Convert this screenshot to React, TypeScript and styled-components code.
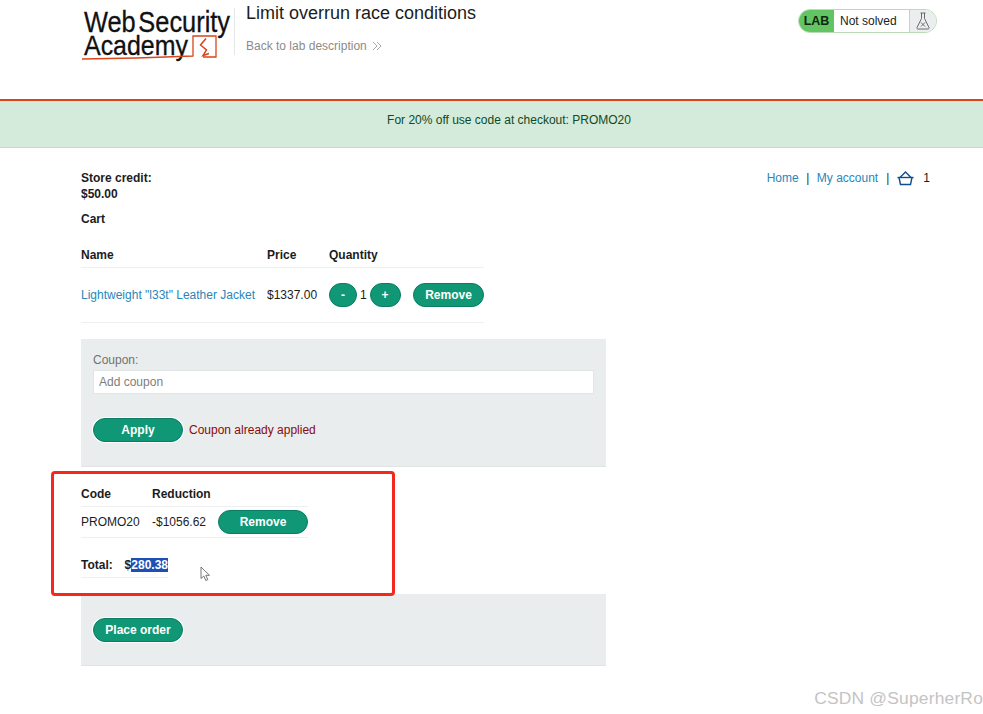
import * as React from 'react'
import styled, { createGlobalStyle } from 'styled-components'

const GlobalStyle = createGlobalStyle`
    html, body {
        margin: 0;
        padding: 0;
        background: #fff;
    }
    body {
        font-family: "Liberation Sans", Arial, sans-serif;
        font-size: 12px;
        color: #1c1c1c;
    }
`

const Page = styled.div`
    position: relative;
    width: 983px;
    height: 714px;
    overflow: hidden;
`

const Header = styled.header`
    height: 101px;
    box-sizing: border-box;
    padding: 0 46px 0 81px;
    display: flex;
    align-items: flex-start;
    border-bottom: 2px solid #d8461b;
`

const LogoWrap = styled.div`
    width: 153px;
    height: 62px;
    flex: none;
`

const TitleBlock = styled.div`
    margin: 8px 0 0 0;
    padding: 0 0 0 11px;
    height: 47px;
    border-left: 1px solid #e6e8e8;
    flex: 1;
`

const Title = styled.h1`
    margin: -5px 0 0;
    font-size: 18px;
    line-height: 21px;
    font-weight: 400;
    color: #1c1c1c;
`

const BackLink = styled.a`
    display: flex;
    align-items: center;
    gap: 5px;
    margin-top: 15px;
    font-size: 12px;
    line-height: 14px;
    color: #8b8b8b;
`

const LabBadge = styled.div`
    flex: none;
    margin-top: 9px;
    width: 139px;
    height: 24px;
    box-sizing: border-box;
    display: flex;
    border: 1px solid #b9dcb4;
    border-radius: 12px;
    overflow: hidden;
    background: #fff;
`

const LabTag = styled.span`
    width: 35px;
    background: #62c462;
    font-size: 12.5px;
    font-weight: 700;
    line-height: 22px;
    text-align: center;
    color: #10260f;
`

const LabStatus = styled.span`
    flex: 1;
    padding-left: 6px;
    font-size: 12px;
    line-height: 22px;
    color: #1c1c1c;
`

const LabIcon = styled.span`
    width: 27px;
    box-sizing: border-box;
    border-left: 1px solid #b9dcb4;
    background: #ebeeee;
    display: flex;
    align-items: center;
    justify-content: center;
`

const Banner = styled.div`
    height: 47px;
    box-sizing: border-box;
    padding-left: 35px;
    background: #d4eadb;
    border-bottom: 1px solid #c4dccb;
    text-align: center;
    font-size: 12px;
    line-height: 39px;
    color: #0f4a22;
`

const Content = styled.main`
    padding: 22px 54px 0 81px;
    position: relative;
`

const TopNav = styled.nav`
    position: absolute;
    top: 22px;
    right: 53px;
    display: flex;
    align-items: center;
    font-size: 12px;
    line-height: 16px;
`

const NavLink = styled.a`
    color: #2a86b8;
`

const NavSep = styled.span<{ $gap: number }>`
    margin: 0 ${(p) => p.$gap}px;
    color: #333;
`

const CartCount = styled.span`
    margin-left: 9px;
    color: #1c1c1c;
`

const Strong = styled.div<{ $top?: number }>`
    font-weight: 700;
    font-size: 12px;
    line-height: 16px;
    margin-top: ${(p) => p.$top ?? 0}px;
`

const Table = styled.div<{ $columns: string; $width: number; $top: number }>`
    display: grid;
    grid-template-columns: ${(p) => p.$columns};
    width: ${(p) => p.$width}px;
    margin-top: ${(p) => p.$top}px;
`

const HeadCell = styled.div`
    font-weight: 700;
    height: 20px;
    line-height: 16px;
    border-bottom: 1px solid #eef0f0;
`

const Cell = styled.div<{ $height: number }>`
    height: ${(p) => p.$height}px;
    display: flex;
    align-items: center;
    border-bottom: 1px solid #eef0f0;
`

const ProductLink = styled.a`
    color: #2a86b8;
`

const Button = styled.button<{ $width: number }>`
    width: ${(p) => p.$width}px;
    height: 24px;
    padding: 0;
    border: 1px solid #0b7d64;
    border-radius: 13px;
    background: #109775;
    color: #fff;
    font-family: inherit;
    font-size: 12px;
    font-weight: 700;
    flex: none;
`

const Qty = styled.span`
    width: 13px;
    text-align: center;
`

const RemoveGap = styled.span`
    width: 13px;
`

const Panel = styled.section<{ $height: number; $top: number }>`
    width: 525px;
    height: ${(p) => p.$height}px;
    margin-top: ${(p) => p.$top}px;
    box-sizing: border-box;
    padding: 0 12px;
    background: #e9edee;
    border-bottom: 1px solid #e0e4e5;
    overflow: hidden;
`

const CouponLabel = styled.label`
    display: block;
    margin-top: 14px;
    line-height: 14px;
    color: #727272;
`

const CouponInput = styled.input`
    display: block;
    width: 501px;
    height: 24px;
    margin-top: 3px;
    box-sizing: border-box;
    padding: 0 5px;
    border: 1px solid #e2e5e6;
    background: #fff;
    font-family: inherit;
    font-size: 12px;
    &::placeholder {
        color: #7d7d7d;
    }
`

const ApplyRow = styled.div`
    display: flex;
    align-items: center;
    gap: 6px;
    margin-top: 24px;
`

const ErrorText = styled.span`
    color: #8b0a0a;
`

const TotalRow = styled.div`
    display: flex;
    align-items: flex-start;
    width: 87px;
    height: 20px;
    margin-top: 19px;
    border-bottom: 1px solid #eef0f0;
    font-weight: 700;
    line-height: 16px;
`

const TotalLabel = styled.span`
    width: 44px;
`

const Selected = styled.span`
    background: #1d4fb4;
    color: #fff;
`

const PlaceButton = styled(Button)`
    margin-top: 24px;
    display: block;
    box-shadow: 0 0 0 1px #fff;
`

const ApplyButton = styled(Button)`
    box-shadow: 0 0 0 1px #fff;
`

const Callout = styled.div`
    position: absolute;
    left: 51px;
    top: 471px;
    width: 344px;
    height: 125px;
    box-sizing: border-box;
    border: 3px solid #f5281e;
    border-radius: 4px;
    pointer-events: none;
`

const Cursor = styled.svg`
    position: absolute;
    left: 200px;
    top: 566px;
`

const Watermark = styled.div`
    position: absolute;
    right: 0;
    top: 688px;
    font-size: 17.4px;
    line-height: 20px;
    letter-spacing: 0.2px;
    color: #c4c4c4;
    white-space: nowrap;
`

const Logo = () => (
    <svg width="153" height="62" viewBox="0 0 153 62">
        <text x="3" y="32" fontFamily="'Liberation Sans', Arial, sans-serif" fontSize="29" wordSpacing="-5" textLength="146" lengthAdjust="spacingAndGlyphs" fill="#111" stroke="#111" strokeWidth="0.300">Web Security</text>
        <text x="3" y="55" fontFamily="'Liberation Sans', Arial, sans-serif" fontSize="28" textLength="104" lengthAdjust="spacingAndGlyphs" fill="#111" stroke="#111" strokeWidth="0.300">Academy</text>
        <path d="M1 59C40 58.500 75 57.500 112 56V36H135V57H122" fill="none" stroke="#d8461b" strokeWidth="1.300" />
        <path d="M125 38.500L119.500 45L125.500 50L122 55.500L128 53.500" fill="none" stroke="#d8461b" strokeWidth="1.500" />
    </svg>
)

const Chevrons = () => (
    <svg width="10" height="10" viewBox="0 0 10 10" fill="none" stroke="#a8a8a8" strokeWidth="1">
        <path d="M1 1L5 5L1 9" />
        <path d="M5 1L9 5L5 9" />
    </svg>
)

const Flask = () => (
    <svg width="14" height="18" viewBox="0 0 14 18" fill="none" stroke="#5c5c5c" strokeWidth="0.900">
        <path d="M4.500 1H9.500M5.500 1V6.500L1 15.500C0.700 16.300 1.200 17 2 17H12C12.800 17 13.300 16.300 13 15.500L8.500 6.500V1" />
        <path d="M5 10.500L9 14.500M9 10.500L5 14.500" />
    </svg>
)

const Basket = () => (
    <svg width="17" height="15" viewBox="0 0 17 15" fill="none" stroke="#0f4d8f" strokeWidth="1.400">
        <path d="M0.500 6.500H16.500" />
        <path d="M3 6.500L8.500 1L14 6.500" />
        <path d="M2 6.500L3.500 13.500H13.500L15 6.500" />
    </svg>
)

const MouseCursor = () => (
    <Cursor width="12" height="16" viewBox="0 0 12 16">
        <path d="M1 1V12.500L3.800 10L5.800 14.500L7.800 13.600L5.800 9.300H9.500Z" fill="#fff" stroke="#555" strokeWidth="0.800" />
    </Cursor>
)

const App = () => (
    <Page>
        <GlobalStyle />
        <Header>
            <LogoWrap><Logo /></LogoWrap>
            <TitleBlock>
                <Title>Limit overrun race conditions</Title>
                <BackLink>Back to lab description <Chevrons /></BackLink>
            </TitleBlock>
            <LabBadge>
                <LabTag>LAB</LabTag>
                <LabStatus>Not solved</LabStatus>
                <LabIcon><Flask /></LabIcon>
            </LabBadge>
        </Header>
        <Banner>For 20% off use code at checkout: PROMO20</Banner>
        <Content>
            <TopNav>
                <NavLink>Home</NavLink>
                <NavSep $gap={7.500}>|</NavSep>
                <NavLink>My account</NavLink>
                <NavSep $gap={8}>|</NavSep>
                <Basket />
                <CartCount>1</CartCount>
            </TopNav>
            <Strong>Store credit:</Strong>
            <Strong>$50.00</Strong>
            <Strong $top={9}>Cart</Strong>
            <Table $columns="186px 62px 155px" $width={403} $top={20}>
                <HeadCell>Name</HeadCell>
                <HeadCell>Price</HeadCell>
                <HeadCell>Quantity</HeadCell>
                <Cell $height={54}><ProductLink>Lightweight "l33t" Leather Jacket</ProductLink></Cell>
                <Cell $height={54}>$1337.00</Cell>
                <Cell $height={54}>
                    <Button $width={28}>-</Button>
                    <Qty>1</Qty>
                    <Button $width={31}>+</Button>
                    <RemoveGap />
                    <Button $width={71}>Remove</Button>
                </Cell>
            </Table>
            <Panel $height={128} $top={16}>
                <CouponLabel>Coupon:</CouponLabel>
                <CouponInput placeholder="Add coupon" />
                <ApplyRow>
                    <ApplyButton $width={90}>Apply</ApplyButton>
                    <ErrorText>Coupon already applied</ErrorText>
                </ApplyRow>
            </Panel>
            <Table $columns="71px 66px 90px" $width={227} $top={19}>
                <HeadCell>Code</HeadCell>
                <HeadCell>Reduction</HeadCell>
                <HeadCell />
                <Cell $height={30}>PROMO20</Cell>
                <Cell $height={30}>-$1056.62</Cell>
                <Cell $height={30}><Button $width={90}>Remove</Button></Cell>
            </Table>
            <TotalRow>
                <TotalLabel>Total:</TotalLabel>
                <span>$<Selected>280.38</Selected></span>
            </TotalRow>
            <Panel $height={72} $top={16}>
                <PlaceButton $width={90}>Place order</PlaceButton>
            </Panel>
        </Content>
        <Callout />
        <MouseCursor />
        <Watermark>CSDN @SuperherRo</Watermark>
    </Page>
)

export default App
